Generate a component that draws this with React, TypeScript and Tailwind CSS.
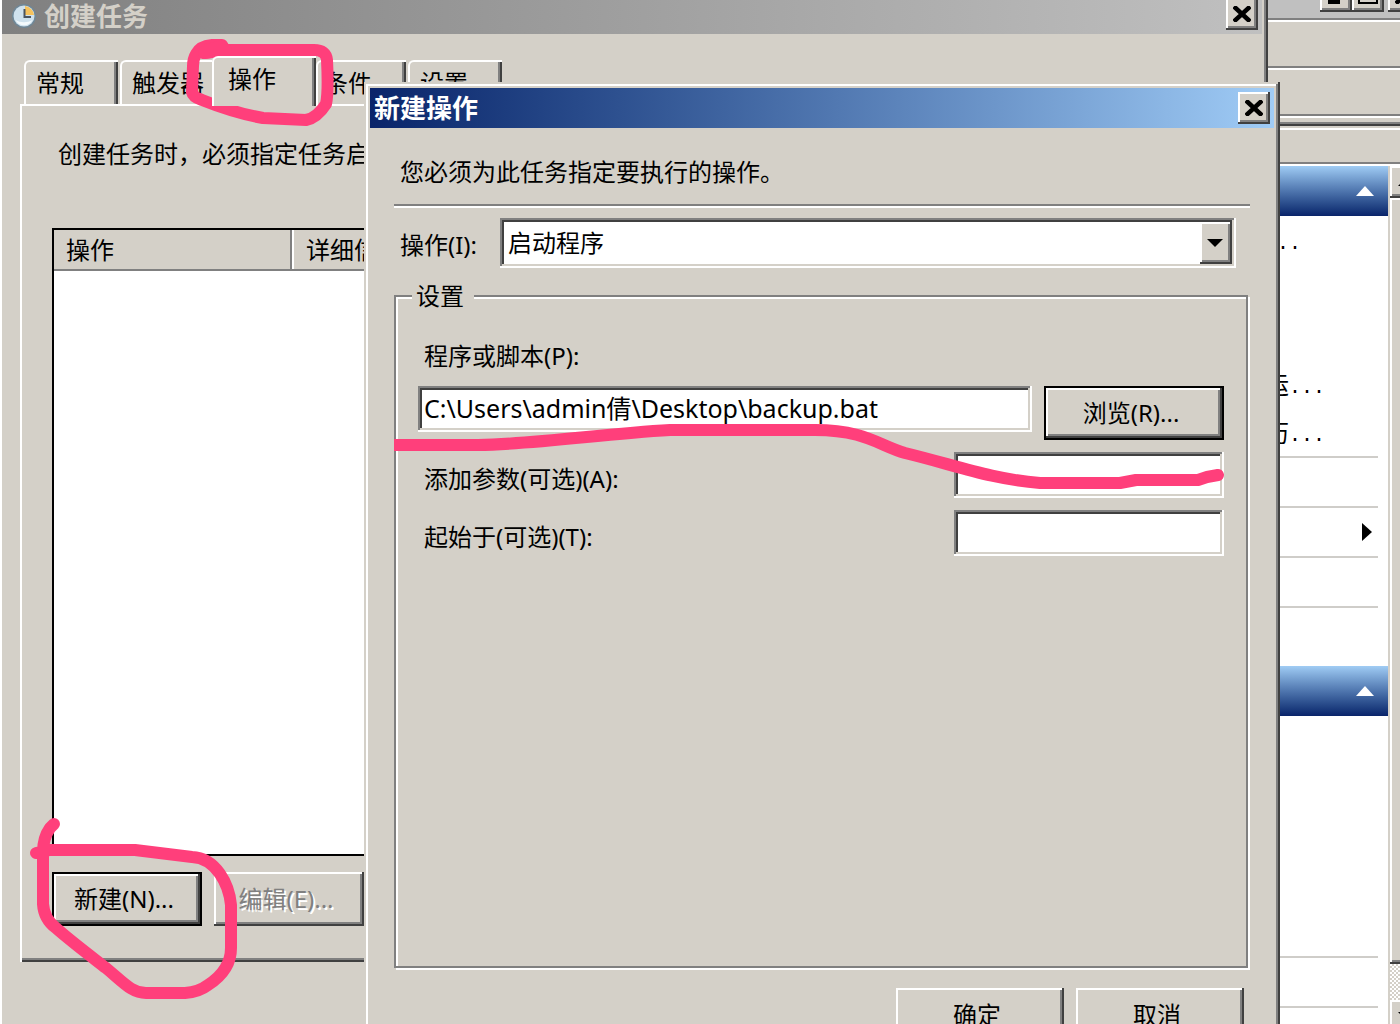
import type { ReactNode } from "react";

const uiFont = "font-['Noto_Sans','Noto_Sans_CJK_SC',sans-serif]";

const raised =
  "bg-[#d4d0c8] shadow-[inset_-2px_-2px_#404040,inset_2px_2px_#fff,inset_-4px_-4px_#808080]";
const sunken =
  "bg-white shadow-[inset_-2px_-2px_#fff,inset_2px_2px_#808080,inset_-4px_-4px_#d4d0c8,inset_4px_4px_#404040]";

function CloseGlyph() {
  return (
    <svg className="h-4 w-[18px]" viewBox="0 0 18 16" aria-hidden="true">
      <path d="M2.500 2L15.500 14M15.500 2L2.500 14" stroke="#000" strokeWidth="4.500" strokeLinecap="square" />
    </svg>
  );
}

function CloseButton() {
  return (
    <button aria-label="关闭" className={`flex h-8 w-8 items-center justify-center ${raised}`}>
      <CloseGlyph />
    </button>
  );
}

function ClockIcon() {
  return (
    <svg className="h-6 w-6" viewBox="0 0 24 24" aria-hidden="true">
      <circle cx="12" cy="12" r="12" fill="#6f8797" />
      <circle cx="12" cy="12" r="10.500" fill="#cfe2ee" />
      <path d="M13 11V2A10 10 0 0 1 22 11z" fill="#f6c25c" />
      <path d="M3.500 16a9.500 9.500 0 0 0 17 0c-5 3-12 3-17 0z" fill="#f4fafd" />
      <path d="M12.500 5v8H19" fill="none" stroke="#4a5560" strokeWidth="2" />
    </svg>
  );
}

function PushButton({
  children,
  width,
  isDefault,
  disabled,
}: {
  children: ReactNode;
  width: string;
  isDefault?: boolean;
  disabled?: boolean;
}) {
  return (
    <button
      disabled={disabled}
      className={`h-[54px] shrink-0 pr-1.5 ${width} ${raised} ${isDefault ? "border-2 border-black" : ""} ${
        disabled ? "text-[#808080] [text-shadow:2px_2px_#fff]" : ""
      }`}
    >
      {children}
    </button>
  );
}

function PaneHeader() {
  return (
    <div className="flex h-[50px] items-center justify-end bg-linear-to-b from-[#a0ccf4] to-[#0a246a] pr-3.5">
      <svg className="h-2.5 w-[18px]" viewBox="0 0 18 10" aria-hidden="true">
        <path d="M9 0l9 10H0z" fill="#fff" />
      </svg>
    </div>
  );
}

function PaneRow({ children }: { children?: ReactNode }) {
  return (
    <div className="flex h-12 items-center pt-2 pl-[22px] whitespace-nowrap font-['Liberation_Mono','Noto_Sans_CJK_SC',monospace]">
      {children}
    </div>
  );
}

function Truncated({ text }: { text: string }) {
  return (
    <>
      <span>{text}</span>
      <span className="text-[20px]">...</span>
    </>
  );
}

function PaneRule() {
  return <div className="mr-2.5 h-0.5 bg-[#cfcdc9]" />;
}

function ConsoleWindow() {
  return (
    <section className="absolute inset-0 flex flex-col overflow-hidden bg-[#d4d0c8]">
      <div className="flex h-[18px] items-end justify-end bg-[#c0c0c0] pb-1.5">
        <button aria-label="最小化" className={`flex h-8 w-8 items-end p-2 ${raised}`}>
          <span className="h-1 w-3 bg-black" />
        </button>
        <button aria-label="最大化" className={`flex h-8 w-8 items-end justify-center pb-2 ${raised}`}>
          <span className="h-4 w-5 border-2 border-t-4 border-black" />
        </button>
        <div className="-mr-5 pl-1">
          <CloseButton />
        </div>
      </div>
      <div className="h-12 border-t-2 border-[#808080] shadow-[inset_0_2px_#fff]" />
      <div className="h-12 border-t-2 border-[#808080] shadow-[inset_0_2px_#fff]" />
      <div className="h-2 border-t-2 border-[#808080] shadow-[inset_0_2px_#fff]" />
      <div className="h-10 border-t-2 border-[#808080] shadow-[inset_0_2px_#404040,inset_0_4px_#d4d0c8,inset_0_6px_#fff]" />
      <div className="flex min-h-0 flex-1 justify-end border-t-2 border-[#808080] pt-0.5 shadow-[inset_0_2px_#fff]">
        <div className="w-[145px] bg-white">
          <PaneHeader />
          <PaneRow>
            <Truncated text="" />
          </PaneRow>
          <PaneRow />
          <PaneRow />
          <PaneRow>
            <Truncated text="运" />
          </PaneRow>
          <PaneRow>
            <Truncated text="历" />
          </PaneRow>
          <PaneRule />
          <PaneRow />
          <PaneRule />
          <div className="flex h-12 items-center justify-end pr-4">
            <svg className="h-[18px] w-2.5" viewBox="0 0 10 18" aria-hidden="true">
              <path d="M0 0l10 9-10 9z" fill="#000" />
            </svg>
          </div>
          <PaneRule />
          <PaneRow />
          <PaneRule />
          <div className="h-[58px]" />
          <PaneHeader />
          <div className="h-60" />
          <PaneRule />
          <PaneRow />
          <PaneRule />
        </div>
        <div className="flex w-3 flex-col overflow-hidden border-l-2 border-[#d4d0c8]">
          <div className={`flex h-8 w-8 shrink-0 items-center justify-center ${raised}`}>
            <svg className="h-2 w-4" viewBox="0 0 16 8" aria-hidden="true">
              <path d="M8 0l8 8H0z" fill="#000" />
            </svg>
          </div>
          <div className={`w-8 flex-1 ${raised}`} />
          <div className="h-9 shrink-0 bg-[conic-gradient(#d4d0c8_25%,#fff_0_50%,#d4d0c8_0_75%,#fff_0)] bg-size-[4px_4px]" />
          <div className={`-mb-2 flex h-8 w-8 shrink-0 items-center justify-center ${raised}`}>
            <svg className="h-2 w-4" viewBox="0 0 16 8" aria-hidden="true">
              <path d="M0 0h16L8 8z" fill="#000" />
            </svg>
          </div>
        </div>
      </div>
    </section>
  );
}

function Tab({ label, box, selected }: { label: string; box: string; selected?: boolean }) {
  return (
    <button
      role="tab"
      aria-selected={!!selected}
      className={`rounded-tl-md border-t-2 border-l-2 border-white bg-[#d4d0c8] text-left ${box} ${
        selected ? "z-10 -mb-0.5 h-[50px] pb-1.5" : "h-11"
      }`}
    >
      {label}
    </button>
  );
}

const tabEdge = "shadow-[inset_-2px_0_#404040,inset_-4px_0_#808080]";

function CreateTaskWindow() {
  return (
    <section className="absolute top-0 right-[132px] bottom-0 left-0 flex flex-col border-l-2 border-white bg-[#d4d0c8] pr-1.5 shadow-[inset_-2px_0_#404040,inset_-4px_0_#808080]">
      <header className="flex h-[34px] shrink-0 items-start justify-between bg-linear-to-r from-[#808080] to-[#c0c0c0] pr-1 pl-2.5">
        <div className="flex items-center gap-2 pt-1">
          <ClockIcon />
          <h1 className="text-[26px] leading-6 font-bold text-[#d4d0c8]">创建任务</h1>
        </div>
        <div className="-mt-0.5">
          <CloseButton />
        </div>
      </header>
      <div role="tablist" className="flex h-[70px] shrink-0 items-end pl-[22px]">
        <Tab label="常规" box={`w-[94px] mr-0.5 pl-2.5 ${tabEdge}`} />
        <Tab label="触发器" box="w-[92px] pl-2.5 whitespace-nowrap" />
        <Tab label="操作" box={`w-[104px] pl-3.5 ${tabEdge}`} selected />
        <Tab label="条件" box={`w-[90px] mr-0.5 pl-1.5 ${tabEdge}`} />
        <Tab label="设置" box={`w-[94px] pl-2.5 ${tabEdge}`} />
      </div>
      <div
        role="tabpanel"
        className="mx-[18px] flex flex-col border-t-2 border-l-2 border-white px-[30px] pt-7 pb-9 shadow-[inset_-2px_-2px_#404040,inset_-4px_-4px_#808080]"
      >
        <p className="h-[94px] overflow-hidden pl-1.5 leading-10 whitespace-nowrap">创建任务时，必须指定任务启</p>
        <div className="h-[628px] border-2 border-black bg-white">
          <table className="w-full table-fixed border-collapse text-left">
            <thead>
              <tr className="h-10 bg-[#d4d0c8]">
                <th className="w-[237px] border-r-2 border-b-2 border-[#808080] p-0 pl-3 leading-9 font-normal">
                  操作
                </th>
                <th className="border-b-2 border-[#808080] p-0 pl-3.5 leading-9 font-normal shadow-[inset_2px_0_#fff]">
                  详细信
                </th>
              </tr>
            </thead>
          </table>
        </div>
        <div className="flex gap-3 pt-4">
          <PushButton width="w-[150px]" isDefault>
            新建(N)...
          </PushButton>
          <PushButton width="w-[150px]" disabled>
            编辑(E)...
          </PushButton>
        </div>
      </div>
    </section>
  );
}

function OptionalField({ id, label }: { id: string; label: string }) {
  return (
    <div className="mt-3 flex h-[46px] items-center justify-between pl-1.5">
      <label htmlFor={id} className="pt-2">
        {label}
      </label>
      <input id={id} type="text" className={`h-full w-[270px] px-1.5 outline-none ${sunken}`} />
    </div>
  );
}

function NewActionDialog() {
  return (
    <section
      role="dialog"
      aria-label="新建操作"
      className="absolute top-[82px] right-[120px] left-[364px] bg-[#d4d0c8] p-1.5 shadow-[inset_-2px_-2px_#404040,inset_2px_2px_#d4d0c8,inset_-4px_-4px_#808080,inset_4px_4px_#fff]"
    >
      <header className="flex h-10 items-center justify-between bg-linear-to-r from-[#0a246a] to-[#a0ccf6] pr-1 pl-1">
        <h2 className="text-[26px] leading-10 font-bold text-white">新建操作</h2>
        <CloseButton />
      </header>
      <div className="px-6 pt-6 pb-6">
        <p className="pl-1.5 leading-10">您必须为此任务指定要执行的操作。</p>
        <div className="mt-3 h-1 border-b-2 border-white bg-[#808080]" />
        <div className="mt-2.5 flex items-center pr-3.5 pl-1.5">
          <label htmlFor="action" className="w-[100px] pt-1">
            操作(I):
          </label>
          <div className={`flex h-[50px] flex-1 p-1 ${sunken}`}>
            <select id="action" className="min-w-0 flex-1 appearance-none bg-transparent pl-1 outline-none">
              <option>启动程序</option>
            </select>
            <span className={`flex w-8 items-center justify-center pr-0.5 ${raised}`}>
              <svg className="h-2 w-4" viewBox="0 0 16 8" aria-hidden="true">
                <path d="M0 0h16L8 8z" fill="#000" />
              </svg>
            </span>
          </div>
        </div>
        <fieldset className="mt-3 mr-0.5 h-[688px] border-2 border-[#808080] px-[22px] shadow-[2px_2px_#fff,inset_2px_2px_#fff]">
          <legend className="-ml-1.5 bg-[#d4d0c8] px-1 pr-2.5 leading-8">设置</legend>
          <label htmlFor="program" className="block pt-[26px] pl-1.5 leading-9">
            程序或脚本(P):
          </label>
          <div className="mt-3 flex items-start gap-3">
            <input
              id="program"
              type="text"
              defaultValue="C:\Users\admin倩\Desktop\backup.bat"
              className={`h-[46px] min-w-0 flex-1 px-1.5 pb-1 text-[25px] outline-none ${sunken}`}
            />
            <PushButton width="w-[180px]" isDefault>
              浏览(R)...
            </PushButton>
          </div>
          <OptionalField id="arguments" label="添加参数(可选)(A):" />
          <OptionalField id="start-in" label="起始于(可选)(T):" />
        </fieldset>
        <div className="mt-5 flex justify-end gap-3 pr-1.5">
          <PushButton width="w-[168px]">确定</PushButton>
          <PushButton width="w-[168px]">取消</PushButton>
        </div>
      </div>
    </section>
  );
}

function MarkerStrokes() {
  return (
    <svg
      className="pointer-events-none absolute top-0 left-0 h-[1024px] w-[1400px]"
      viewBox="0 0 1400 1024"
      fill="none"
      stroke="#ff3f7b"
      strokeWidth="12"
      strokeLinecap="round"
      strokeLinejoin="round"
      aria-hidden="true"
    >
      <path d="M222 45H212Q200 46 196 54Q193 59 193 66L192 92Q193 97 202 100C222 108 240 114 263 118L306 120Q317 118 326 104C328 95 328 80 327 60Q326 50 314 50H228L204 53" />
      <path d="M206 50L222 46L226 50L204 53z" fill="#ff3f7b" />
      <path d="M400 445H478C540 444 600 434 670 430H815C865 430 880 446 905 453C955 465 990 479 1040 483H1120L1136 480H1198L1207 477L1218 475" />
      <path d="M394 445H404" strokeLinecap="butt" />
      <path d="M54 824L50 828Q43 838 43 852V904Q44 919 56 928C72 942 88 954 106 968C124 983 132 993 146 993H185Q199 992 208 985C222 976 231 964 231 948V905C229 884 216 858 192 857L135 850H50L36 853" />
    </svg>
  );
}

export default function App() {
  return (
    <main className={`relative h-screen w-full overflow-hidden bg-[#d4d0c8] text-[24px] text-black ${uiFont}`}>
      <ConsoleWindow />
      <CreateTaskWindow />
      <NewActionDialog />
      <MarkerStrokes />
    </main>
  );
}
